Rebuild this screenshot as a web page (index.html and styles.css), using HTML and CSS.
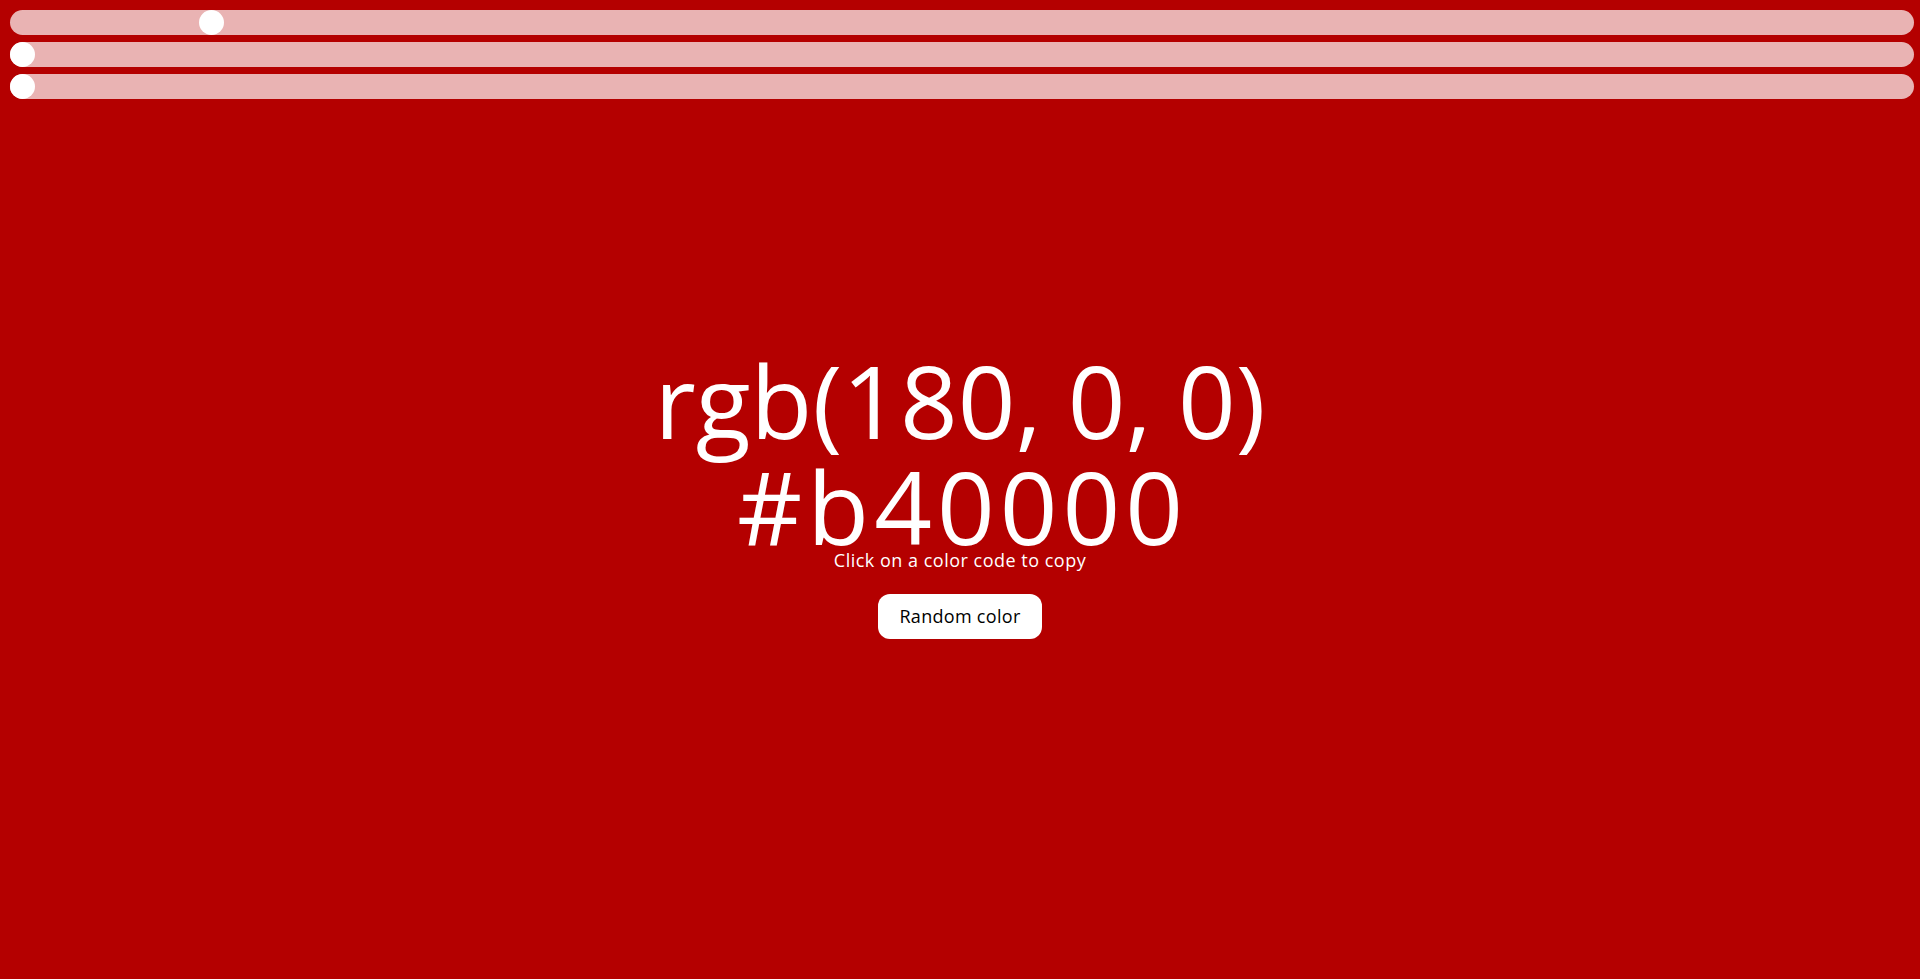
FILE: index.html
```html
<!DOCTYPE html>
<html lang="en">
<head>
<meta charset="utf-8">
<title>Color picker</title>
<link rel="stylesheet" href="styles.css">
</head>
<body>
  <div class="sliders">
    <input class="slider" type="range" min="0" max="255" step="any" value="25.65" aria-label="Red">
    <input class="slider" type="range" min="0" max="255" step="any" value="0" aria-label="Green">
    <input class="slider" type="range" min="0" max="255" step="any" value="0" aria-label="Blue">
  </div>
  <main class="display">
    <div class="code code-rgb">rgb(180, 0, 0)</div>
    <div class="code code-hex">#b40000</div>
    <p class="hint">Click on a color code to copy</p>
    <button class="random-btn" type="button">Random color</button>
  </main>
</body>
</html>
```

FILE: styles.css
```css
html, body {
  margin: 0;
  padding: 0;
}

body {
  background: #b40000;
  color: #ffffff;
  font-family: "Open Sans", "DejaVu Sans", sans-serif;
  height: 979px;
  overflow: hidden;
}

.sliders {
  display: flex;
  flex-direction: column;
  gap: 7px;
  padding: 10px 6px 0 10px;
}

.slider {
  -webkit-appearance: none;
  appearance: none;
  display: block;
  margin: 0;
  width: 100%;
  height: 25px;
  border-radius: 13px;
  background: rgba(255, 255, 255, 0.7);
  outline: none;
}

.slider::-webkit-slider-thumb {
  -webkit-appearance: none;
  appearance: none;
  width: 25px;
  height: 25px;
  border-radius: 50%;
  background: #ffffff;
  border: none;
  cursor: pointer;
}

.display {
  display: flex;
  flex-direction: column;
  align-items: center;
  margin-top: 248px;
}

.code {
  font-size: 101px;
  line-height: 106px;
  white-space: nowrap;
  cursor: pointer;
}

.code-hex {
  letter-spacing: 5px;
  padding-left: 5px;
}

.hint {
  margin: -9px 0 0;
  font-size: 18px;
  line-height: 20px;
  letter-spacing: 0.5px;
}

.random-btn {
  margin-top: 24px;
  font-family: inherit;
  font-size: 18px;
  line-height: 21px;
  letter-spacing: 0.3px;
  padding: 12px 21px;
  border: none;
  border-radius: 12px;
  background: #ffffff;
  color: #000000;
  cursor: pointer;
}
```
